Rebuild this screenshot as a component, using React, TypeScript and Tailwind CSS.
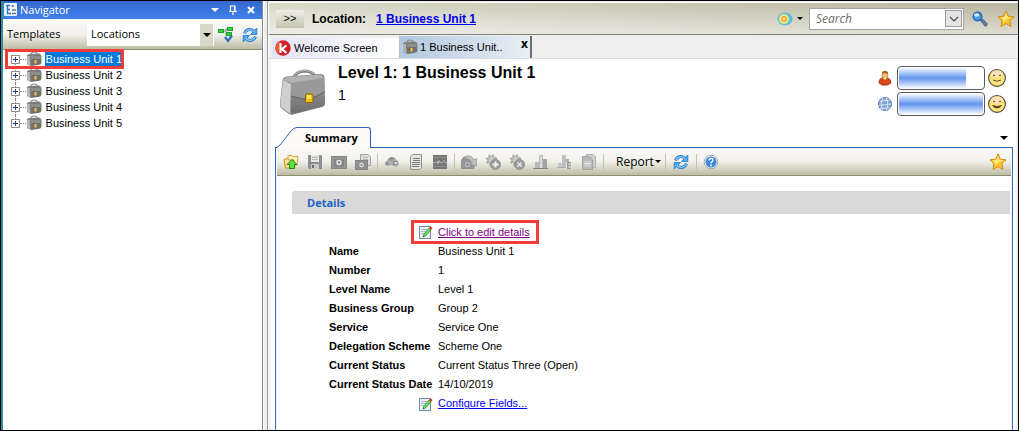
import React from "react";

type IconProps = { className?: string };

const Briefcase = ({ className = "size-4" }: IconProps) => (
  <svg viewBox="0 0 48 48" className={className} aria-hidden="true">
    <defs>
      <linearGradient id="caseFace" x1="0" y1="0" x2="0" y2="1">
        <stop offset="0" stopColor="#a8a8a8" />
        <stop offset="0.55" stopColor="#828282" />
        <stop offset="1" stopColor="#6e6e6e" />
      </linearGradient>
    </defs>
    <path d="M15 9 Q18 3.500 25 3 Q33 3 36 8" fill="none" stroke="#7c7c7c" strokeWidth="3" />
    <path d="M15 8.500 Q18 3 25 2.500 Q33 2.500 36 7.500" fill="none" stroke="#c4c4c4" strokeWidth="1" />
    <path d="M3.500 12 Q4 9 8 8.500 L41 6 Q45 6 45.500 9 L46 35 Q46 38 43 39 L14 46.500 Q12 47 10 46 L2 40 Q0.500 38 1 35 Z" fill="#808080" />
    <path d="M4 12 L12 16 L11.500 46 L2 39 Q1 37 1.500 34 Z" fill="#cfcfcf" />
    <path d="M12 15 L45 10 L45.500 35 Q45.500 38 43 38.500 L15 45.500 Q12 46 11.500 44 Z" fill="url(#caseFace)" />
    <path d="M12 15 L45 10 L45.500 24 L36 29 L24 31 L12 28 Z" fill="#999999" />
    <path d="M12 28 L24 31 L36 29 L45.500 24" fill="none" stroke="#626262" strokeWidth="1" />
    <path d="M4 12 Q6 9 9 9 L41 6.500 Q44 7 45 10 L12 15 Z" fill="#b2b2b2" />
    <rect x="26.500" y="26" width="7.500" height="8.500" rx="1" fill="#f5bd18" stroke="#8a6200" strokeWidth="1" />
    <rect x="28" y="27" width="4" height="4" fill="#ffe55f" />
  </svg>
);

const TreeBriefcase = () => (
  <svg viewBox="0 0 16 16" className="size-4 shrink-0" aria-hidden="true">
    <path d="M5 3.500 Q5 1 8 1 Q11 1 11.500 3.500" fill="none" stroke="#8a8a8a" strokeWidth="1.200" />
    <path d="M1 5 Q1 3 4 3 L13 2.500 Q15.500 3 15.500 6 L15.500 12 Q15 14 12 14 L5 15 L1 13 Z" fill="#7f7f7f" />
    <path d="M1 5 L4 5 L4.500 15 L1 13 Z" fill="#b3b3b3" />
    <path d="M4.500 5 L14 4.500 L15 12 L12.500 13.500 L5 14.500 Z" fill="#707070" />
    <path d="M4.500 5 H14 L15 8 H5 Z" fill="#8d8d8d" />
    <path d="M8.500 9 H10.500 V12.500 H8.500 Z" fill="#ffc72e" />
  </svg>
);

const Refresh = () => (
  <svg viewBox="0 0 16 16" className="size-4" aria-hidden="true">
    <path d="M2.500 6.500 Q4 2.500 8 2.500 Q10.500 2.500 12 4.500" fill="none" stroke="#2379cf" strokeWidth="3" />
    <path d="M14.800 1 V7.500 H8.500 Z" fill="#4fa4ee" stroke="#2379cf" strokeWidth="0.800" strokeLinejoin="round" />
    <path d="M2.800 6.300 Q4.300 2.600 8 2.600 Q10.500 2.700 12.500 5" fill="none" stroke="#8ccbfb" strokeWidth="1.300" />
    <path d="M13.500 9.500 Q12 13.500 8 13.500 Q5.500 13.500 4 11.500" fill="none" stroke="#2379cf" strokeWidth="3" />
    <path d="M1.200 15 V8.500 H7.500 Z" fill="#4fa4ee" stroke="#2379cf" strokeWidth="0.800" strokeLinejoin="round" />
    <path d="M13.200 9.700 Q11.700 13.400 8 13.400 Q5.500 13.300 3.500 11" fill="none" stroke="#8ccbfb" strokeWidth="1.300" />
  </svg>
);

const Star = () => (
  <svg viewBox="0 0 18 18" className="size-[18px]" aria-hidden="true">
    <path d="M9 1 L11.400 6.200 L17 6.800 L12.800 10.700 L14 16.500 L9 13.500 L4 16.500 L5 10.700 L1 6.800 L6.600 6.200 Z" fill="#fdc62b" stroke="#d98716" strokeWidth="1" strokeLinejoin="round" />
    <path d="M9 3 L10.600 7 L14.500 7.600 L9 9.500 L5.500 13 L6.300 10 L3.500 7.600 L7.200 7 Z" fill="#ffe978" />
  </svg>
);

const EditIcon = () => (
  <svg viewBox="0 0 14 14" className="size-[14px] shrink-0" aria-hidden="true">
    <rect x="0.500" y="1.500" width="11" height="12" fill="#e9f0f8" stroke="#7089ad" />
    <path d="M2 4.500H8M2 6.500H7M2 8.500H5" stroke="#a9b9cd" />
    <path d="M10 3 L12 5 L6.500 11 L4 12 L4.800 9.300 Z" fill="#6ad858" stroke="#2f9a28" strokeWidth="0.800" />
    <path d="M10 3 L11.500 1.200 L13.500 3 L12 5 Z" fill="#d8382b" />
    <path d="M4 12 L4.500 10.500 L5.500 11.500 Z" fill="#333" />
  </svg>
);

const Smiley = ({ big = false }: { big?: boolean }) => (
  <svg viewBox="0 0 20 20" className="size-5" aria-hidden="true">
    <circle cx="10" cy="10" r="8.400" fill="#fde27a" stroke="#4e4a3c" strokeWidth="1.100" />
    <ellipse cx="10" cy="6" rx="6" ry="3.800" fill="#ffe2b4" />
    <circle cx="7" cy="7.500" r="0.800" fill="#2c2818" />
    <circle cx="13" cy="7.500" r="0.800" fill="#2c2818" />
    {big ? (
      <path d="M5.500 11.500 Q10 16.500 14.500 11.500 Q10 13.500 5.500 11.500Z" fill="#3b2c12" stroke="#3b2c12" strokeWidth="0.700" />
    ) : (
      <path d="M6 12 Q10 14.500 14 12" fill="none" stroke="#4c4226" strokeWidth="0.900" />
    )}
  </svg>
);

const G = ({ children }: { children: React.ReactNode }) => (
  <svg viewBox="0 0 16 16" className="size-4" aria-hidden="true">
    {children}
  </svg>
);

const Gear = () => (
  <>
    <circle cx="6.500" cy="6" r="4" fill="#c9c9c9" />
    <circle cx="6.500" cy="6" r="4.800" fill="none" stroke="#adadad" strokeWidth="2" strokeDasharray="2 1.770" />
    <circle cx="6.500" cy="6" r="3.600" fill="none" stroke="#a8a8a8" strokeWidth="1" />
    <circle cx="10.500" cy="10.500" r="5" fill="#9c9c9c" stroke="#858585" strokeWidth="0.800" />
  </>
);

const groups: { label: string; icon: React.ReactNode }[][] = [
  [
    {
      label: "Open parent",
      icon: (
        <G>
          <path d="M5 3.500 V1.500 H9 L10 2.500 H15 L14 11 H5 Z" fill="#fff2c0" stroke="#d9a436" />
          <path d="M1 5.500 L4 4.500 L6 6 H11 L10.500 14 H2.500 Z" fill="#ffe690" stroke="#cf9120" />
          <path d="M9 5.500 L14 10.500 H11.500 V14.500 H6.500 V10.500 H4 Z" fill="#62e03e" stroke="#16871a" />
        </G>
      ),
    },
    {
      label: "Save",
      icon: (
        <G>
          <path d="M1 1 H14 L15 2 V15 H2 L1 14 Z" fill="#8f8f8f" />
          <rect x="4" y="1" width="8" height="7" fill="#e6e6e4" />
          <path d="M5 3.500H11M5 5.500H11" stroke="#b5b5b5" />
          <rect x="4" y="10" width="8" height="5" fill="#c8c8c8" />
          <rect x="5" y="11" width="2" height="3" fill="#6b6b6b" />
        </G>
      ),
    },
    {
      label: "Photo",
      icon: (
        <G>
          <rect x="0.500" y="2.500" width="15" height="12" fill="#959595" stroke="#858585" />
          <rect x="3" y="5" width="10" height="7.500" fill="#848484" />
          <circle cx="8" cy="8.500" r="2.700" fill="#ececec" />
          <circle cx="8" cy="8.500" r="1.200" fill="#757575" />
        </G>
      ),
    },
    {
      label: "Copy photo",
      icon: (
        <G>
          <path d="M5.500 0.500 H13 L15.500 3 V11.500 H5.500 Z" fill="#dededc" stroke="#a2a2a2" />
          <path d="M8 3.500H13M8 5.500H13" stroke="#b5b5b5" />
          <rect x="0.500" y="6.500" width="12" height="9" fill="#919191" stroke="#838383" />
          <circle cx="6.500" cy="11" r="2.200" fill="#e4e4e4" />
          <circle cx="6.500" cy="11" r="1" fill="#777" />
        </G>
      ),
    },
  ],
  [
    {
      label: "Find",
      icon: (
        <G>
          <path d="M1 9 L4 5 L7 3 L11 4 L14.500 8 L15 11 L12 13 L8 11 L5 12 L1 11 Z" fill="#acacac" />
          <path d="M4 5 L7 3 L11 4 L8 7 Z" fill="#8f8f8f" />
          <circle cx="3.500" cy="9.500" r="2.500" fill="#969696" stroke="#c5c5c5" strokeWidth="0.700" />
          <circle cx="11" cy="9" r="3" fill="#868686" stroke="#b8b8b8" />
          <circle cx="11.500" cy="9" r="1.300" fill="#e0e0e0" />
        </G>
      ),
    },
    {
      label: "Document",
      icon: (
        <G>
          <path d="M4.500 0.500 H13.500 V13.500 L11.500 15.500 H2.500 V2.500 Z" fill="#e4e4e2" stroke="#909090" />
          <path d="M5 4.500H12M5 6.500H12M4 8.500H12M4 10.500H12M4 12.500H11" stroke="#7c7c7c" />
        </G>
      ),
    },
    {
      label: "Activity",
      icon: (
        <G>
          <rect x="1" y="1" width="14" height="14" fill="#777777" />
          <path d="M1 3.500H15M1 12.500H15" stroke="#8c8c8c" />
          <path d="M1 8.500 H4 L5 7 L6 10 L7 6.500 L8 9 L9 8 L10 9 L12 6.500 L13 8.500 H15" fill="none" stroke="#ccc" strokeWidth="0.700" />
        </G>
      ),
    },
  ],
  [
    {
      label: "Send photo",
      icon: (
        <G>
          <path d="M0.500 6 L3 3 H8 L11 6 H13 V14.500 H0.500 Z" fill="#989898" stroke="#858585" strokeWidth="0.800" />
          <path d="M3 3.500 Q6 0.500 10 2.500 Q12 3.500 12.500 6 L15.500 4.500 V12 L9 10 L11 8.500 Q9 4.500 3 3.500 Z" fill="#c0c0c0" stroke="#909090" strokeWidth="0.700" />
          <circle cx="6.500" cy="10.500" r="1.800" fill="#777" stroke="#e2e2e2" />
        </G>
      ),
    },
    {
      label: "Add process",
      icon: (
        <G>
          <Gear />
          <path d="M10.500 7.500V13.500M7.500 10.500H13.500" stroke="#f5f5f5" strokeWidth="1.800" />
        </G>
      ),
    },
    {
      label: "Remove process",
      icon: (
        <G>
          <Gear />
          <path d="M8.500 8.500L12.500 12.500M12.500 8.500L8.500 12.500" stroke="#ededed" strokeWidth="1.500" />
        </G>
      ),
    },
    {
      label: "Chart",
      icon: (
        <G>
          <rect x="2" y="8" width="4" height="6" fill="#b9b9b9" />
          <rect x="6" y="1" width="4" height="13" fill="#bcbcbc" />
          <rect x="7" y="2" width="2" height="12" fill="#dadada" />
          <rect x="10" y="5" width="4" height="9" fill="#a5a5a5" />
          <path d="M0 14.500H15" stroke="#808080" />
        </G>
      ),
    },
    {
      label: "Chart export",
      icon: (
        <G>
          <rect x="1" y="9" width="4" height="4" fill="#c8c8c8" />
          <rect x="5" y="1" width="4" height="12" fill="#bfbfbf" />
          <rect x="9" y="5" width="3" height="8" fill="#b0b0b0" />
          <path d="M0 13.500H9" stroke="#aaa" />
          <rect x="9" y="8" width="6" height="7" fill="#e7e7e4" />
          <path d="M14 8.700 H10.700 V14.300 H14 M10.700 11.500H14" fill="none" stroke="#999" strokeWidth="1.400" />
        </G>
      ),
    },
    {
      label: "Copy",
      icon: (
        <G>
          <path d="M5.500 0.500 H12 L14.500 3 V13.500 H5.500 Z" fill="#cfcfcd" stroke="#b0b0b0" />
          <path d="M1.500 2.500 H8 L11.500 6 V15.500 H1.500 Z" fill="#bababa" stroke="#a2a2a2" />
          <path d="M3.500 7H9.500V13H3.500Z" fill="#cecece" />
          <path d="M3 9.500H10" stroke="#e5e5e5" />
        </G>
      ),
    },
  ],
];

const Sep = () => <span className="mx-[2px] h-4 w-px shrink-0 bg-[#c3c3ae]" />;

const Caret = () => (
  <svg viewBox="0 0 6 3" className="h-[3px] w-[6px]" aria-hidden="true">
    <path d="M0 0H6L3 3Z" fill="currentColor" />
  </svg>
);

const units = [1, 2, 3, 4, 5];

const details: [string, string][] = [
  ["Name", "Business Unit 1"],
  ["Number", "1"],
  ["Level Name", "Level 1"],
  ["Business Group", "Group 2"],
  ["Service", "Service One"],
  ["Delegation Scheme", "Scheme One"],
  ["Current Status", "Current Status Three (Open)"],
  ["Current Status Date", "14/10/2019"],
];

function Navigator() {
  return (
    <aside className="flex w-[262px] shrink-0 flex-col border-r border-l-2 border-r-[#7d8990] border-l-[#2b8ea5] bg-white">
      <header className="flex h-[18px] items-center bg-gradient-to-b from-[#3568cf] to-[#4080ea] pr-[2px] pl-px text-white">
        <svg viewBox="0 0 14 14" className="size-[14px]" aria-hidden="true">
          <rect width="13" height="13" rx="1" fill="#edf3fb" />
          <path d="M2 2.500H6M3.500 3V10.500H7M3.500 6.500H6" fill="none" stroke="#2e74c8" strokeWidth="1.400" />
          <path d="M7.500 3H10M8 7H12M8 10.500H12" stroke="#6b7484" strokeWidth="1.400" />
        </svg>
        <h2 className="ml-[2px] flex-1 font-['Open_Sans',sans-serif] text-[11px] leading-4">Navigator</h2>
        <button aria-label="Panel menu" className="grid size-[18px] place-items-center">
          <svg viewBox="0 0 8 4" className="h-1 w-2"><path d="M0 0H8L4 4Z" fill="white" /></svg>
        </button>
        <button aria-label="Pin" className="grid size-[18px] place-items-center">
          <svg viewBox="0 0 8 10" className="h-[10px] w-2"><path d="M1.500 6V1H6V6M0 6.500H8M4 7V10M5.500 1V6" fill="none" stroke="white" strokeWidth="1.200" /></svg>
        </button>
        <button aria-label="Close" className="grid size-[18px] place-items-center">
          <svg viewBox="0 0 8 8" className="size-2"><path d="M1 1L7 7M7 1L1 7" stroke="white" strokeWidth="2" /></svg>
        </button>
      </header>
      <div className="flex h-[31px] items-center border-t border-b border-t-white border-b-[#8b8b77] bg-gradient-to-b from-[#faf9f6] via-[#f1f0ea] to-[#bebda5] pr-[2px] pl-[4px] font-['Open_Sans',sans-serif]">
        <label htmlFor="template" className="w-20 shrink-0 text-[11px]">Templates</label>
        <div className="relative w-[127px]">
          <select id="template" className="block h-[22px] w-full appearance-none bg-white pl-1 text-[11px] text-black outline-none">
            <option>Locations</option>
          </select>
          <span className="pointer-events-none absolute top-0 right-px grid h-full w-[13px] place-items-center bg-[#d9d7c8]">
            <svg viewBox="0 0 8 4" className="h-1 w-2"><path d="M0 0H8L4 4Z" /></svg>
          </span>
        </div>
        <button aria-label="Apply template" className="ml-[2px] grid size-5 place-items-center">
          <svg viewBox="0 0 16 16" className="size-4">
            <path d="M5 4H8M8 2H10M8 2V8" fill="none" stroke="#8b8b8b" />
            <rect x="0.500" y="2.500" width="5" height="3" fill="#36d445" stroke="#18a32b" />
            <rect x="9.500" y="0.500" width="5" height="3" fill="#36d445" stroke="#18a32b" />
            <rect x="8.500" y="5.500" width="5" height="3" fill="#36d445" stroke="#18a32b" />
            <path d="M7 10L10 14L14 8.500" fill="none" stroke="#2f6fbe" strokeWidth="2.200" />
          </svg>
        </button>
        <button aria-label="Refresh" className="ml-1 grid size-5 place-items-center"><Refresh /></button>
      </div>
      <ul className="pt-px pl-1">
        {units.map((n) => (
          <li
            key={n}
            className={
              n === 1
                ? "relative flex h-4 w-[115px] items-center pl-1 outline-3 -outline-offset-1 outline-[#f23c3c]"
                : "flex h-4 w-[115px] items-center pl-1"
            }
          >
            <span className="flex h-4 flex-col items-center">
              <span className={n === 1 ? "h-1" : "h-1 border-l border-dotted border-[#808080]"} />
              <button aria-label={`Expand Business Unit ${n}`}>
                <svg viewBox="0 0 9 9" className="block size-[9px]">
                  <rect x="0.500" y="0.500" width="8" height="8" fill="#f8f8f8" stroke="#8f8f8f" />
                  <path d="M2 4.500H7M4.500 2V7" stroke="#26408f" />
                </svg>
              </button>
              <span className={n === 5 ? "h-[3px]" : "h-[3px] border-l border-dotted border-[#808080]"} />
            </span>
            <span className="w-[6px] border-t border-dotted border-[#808080]" />
            <TreeBriefcase />
            <a
              href={`#unit-${n}`}
              className={
                n === 1
                  ? "ml-[3px] bg-[#0078d7] pl-px text-[11px] leading-[15px] whitespace-nowrap text-white"
                  : "ml-[3px] pl-px text-[11px] leading-[15px] whitespace-nowrap"
              }
            >
              Business Unit {n}
            </a>
          </li>
        ))}
      </ul>
    </aside>
  );
}

function Gauge({ value, label }: { value: number; label: string }) {
  return (
    <div role="meter" aria-label={label} aria-valuenow={value} className="h-6 w-[88px] rounded-[4px] border border-[#5c5c5c] bg-white p-px">
      <div className="h-full bg-gradient-to-b from-[#f4f7fe] via-[#6394ec] to-[#f4f7fe]" style={{ width: `${value}%` }} />
    </div>
  );
}

function LocationBar() {
  return (
    <div className="flex h-[33px] items-center border-t border-b border-t-white border-b-[#808078] bg-[linear-gradient(to_bottom,rgba(255,255,255,0),rgba(255,255,255,0.55)),linear-gradient(to_right,#d8d8c8,#b7b59c)] pr-[3px] pl-[7px] text-[12px] font-bold">
      <button aria-label="Expand" className="h-[18px] w-7 bg-gradient-to-b from-[#efeee6] to-[#c5c4af] text-[11px] font-normal">&gt;&gt;</button>
      <span className="ml-2">Location:</span>
      <a href="#location" className="ml-[10px] flex-1 text-[#0000ee] underline">1 Business Unit 1</a>
      <button aria-label="Radar options" className="flex items-center gap-1">
        <svg viewBox="0 0 16 14" className="h-[14px] w-4">
          <ellipse cx="8" cy="7" rx="7.500" ry="6.500" fill="#5cbbe2" />
          <circle cx="7" cy="7" r="5.300" fill="#a6e0b0" />
          <circle cx="7" cy="7" r="4.300" fill="#fff05d" />
          <circle cx="7" cy="7" r="2.600" fill="#ffb05c" stroke="#ee8a3c" strokeWidth="0.800" />
          <circle cx="7" cy="7" r="1.300" fill="#ffe28a" />
        </svg>
        <Caret />
      </button>
      <div className="ml-[6px] flex h-[22px] w-[155px] items-center border border-[#a5a5a5] bg-white pr-px">
        <input aria-label="Search" placeholder="Search" className="h-full min-w-0 flex-1 pl-[6px] font-['Open_Sans',sans-serif] text-[12px] font-normal italic outline-none placeholder:text-[#6d6d6d]" />
        <button aria-label="Search options" className="grid h-[17px] w-[17px] place-items-center border border-[#9c9c9c] bg-[#e4e4e4]">
          <svg viewBox="0 0 10 6" className="h-[6px] w-[10px]"><path d="M1 1L5 5L9 1" fill="none" stroke="#444" strokeWidth="1.100" /></svg>
        </button>
      </div>
      <button aria-label="Run search" className="ml-2">
        <svg viewBox="0 0 16 16" className="size-4">
          <path d="M8 9L10 7.500L15.500 13L13.500 15.500Z" fill="#5b7bb0" stroke="#2c4673" strokeWidth="0.700" />
          <circle cx="5.500" cy="5.500" r="4.300" fill="#4d9ce6" stroke="#2763b4" strokeWidth="1.500" />
          <ellipse cx="4.500" cy="4" rx="2.500" ry="1.800" fill="#d6f1ff" />
        </svg>
      </button>
      <button aria-label="Add to favourites" className="ml-[9px]"><Star /></button>
    </div>
  );
}

function Tabs() {
  return (
    <div className="flex h-6 items-end border-b border-[#dcdcdc] pt-px pl-[3px]">
      <a href="#welcome" className="flex h-[20px] w-[127px] items-center gap-[3px] bg-gradient-to-r from-[#e4e4f7] to-white pl-[3px] text-[11px]">
        <svg viewBox="0 0 16 16" className="size-4" aria-hidden="true">
          <circle cx="8" cy="8" r="7.700" fill="#d01f26" />
          <path d="M5 0.900 A7.700 7.700 0 0 0 3.500 14 Z" fill="#e8622a" />
          <path d="M5.500 3V13M11.500 5.500L7 9L11.500 13" fill="none" stroke="white" strokeWidth="2.200" />
        </svg>
        Welcome Screen
      </a>
      <div className="flex h-[22px] w-[133px] items-center border-r-2 border-l border-r-[#6e6e6e] border-l-[#b6bfd0] bg-gradient-to-r from-[#b3c7e0] to-[#e9eff6] pl-[2px] text-[11px]">
        <TreeBriefcase />
        <a href="#unit" className="ml-[2px] flex-1">1 Business Unit..</a>
        <button aria-label="Close tab" className="mr-[2px] mb-[6px] font-['Open_Sans',sans-serif] text-[12px] leading-4 font-bold">x</button>
      </div>
    </div>
  );
}

function Record() {
  return (
    <div className="mr-[2px] ml-[2px] flex flex-1 flex-col bg-white">
      <div className="flex items-start pt-[5px] pr-[9px] pl-2">
        <Briefcase className="mt-1 size-12 shrink-0" />
        <div className="ml-[11px] min-w-0 flex-1">
          <h1 className="text-[16px] leading-[18px] font-bold">Level 1: 1 Business Unit 1</h1>
          <p className="mt-[4px] text-[14px] leading-[18px]">1</p>
        </div>
        <div className="mt-[2px] flex flex-col gap-[2px]">
          <div className="flex items-center gap-[2px]">
            <svg viewBox="0 0 16 16" className="mr-[2px] size-4" aria-hidden="true">
              <path d="M2 13 Q2 8 6 8 H11 Q14 9 14 13 Q11 16 5 15 Z" fill="#d8481c" stroke="#98290d" strokeWidth="0.800" />
              <ellipse cx="8" cy="5" rx="3" ry="4" fill="#f2c177" stroke="#a66b20" strokeWidth="0.600" />
              <path d="M5 4 Q5 0.500 8 1 Q11 0.500 11 4 Q8 2.500 5 4Z" fill="#9c681b" />
              <path d="M6 8L8 10L10 8" fill="#ffe0b0" />
            </svg>
            <Gauge value={80} label="User rating" />
            <Smiley />
          </div>
          <div className="flex items-center gap-[2px]">
            <svg viewBox="0 0 16 16" className="mr-[2px] size-4" aria-hidden="true">
              <circle cx="8" cy="8" r="6.600" fill="#7fa3d6" stroke="#4c6d9a" strokeWidth="0.800" />
              <path d="M2.500 5.500L13 4M1.500 9.500L14.500 8M3 12.500L13 12M6 1.500Q2.500 8 6 14.500M9 1.500Q12.500 8 9 14.500" fill="none" stroke="#e0eaf6" strokeWidth="0.900" />
            </svg>
            <Gauge value={100} label="Global rating" />
            <Smiley big />
          </div>
        </div>
      </div>

      <div className="relative mt-[11px] -mb-px flex h-[21px] items-end pr-[8px] pl-[6px]">
        <svg viewBox="0 0 20 21" className="h-[21px] w-5 shrink-0" aria-hidden="true">
          <path d="M0 20.500 L3 18 L14 4 Q17 0.500 20 0.500 V21 H0Z" fill="#fbfaf8" />
          <path d="M0 20.500 L3 18 L14 4 Q17 0.500 20 0.500" fill="none" stroke="#2e68bd" />
        </svg>
        <a href="#summary" className="flex h-[21px] items-center rounded-tr-[3px] border-t border-r border-[#2e68bd] bg-[#fbfaf8] pr-3 pl-2 font-['Open_Sans',sans-serif] text-[11px] font-bold">Summary</a>
        <button aria-label="Tab list" className="mb-[8px] ml-auto">
          <svg viewBox="0 0 8 4" className="block h-1 w-2"><path d="M0 0H8L4 4Z" /></svg>
        </button>
      </div>

      <section className="mr-[3px] ml-[4px] flex-1 border border-b-0 border-[#2e68bd]">
        <div className="mx-px flex h-7 items-center border-b border-[#8d8d72] bg-gradient-to-b from-[#fbfaf8] via-[#f1f0ea] to-[#bdbca4] pr-[4px] pl-[2px]">
          {groups.map((group, i) => (
            <React.Fragment key={i}>
              {group.map((item) => (
                <button key={item.label} aria-label={item.label} className="grid size-6 shrink-0 place-items-center">{item.icon}</button>
              ))}
              <Sep />
            </React.Fragment>
          ))}
          <button className="mr-[2px] ml-2 flex items-center gap-px pl-[2px] font-['Open_Sans',sans-serif] text-[12px] leading-4">Report<Caret /></button>
          <Sep />
          <button aria-label="Refresh" className="mx-px grid size-6 place-items-center"><Refresh /></button>
          <Sep />
          <button aria-label="Help" className="grid size-6 place-items-center">
            <G>
              <circle cx="8" cy="8" r="6.800" fill="#f4f4f4" stroke="#8d959e" strokeWidth="0.800" />
              <circle cx="8" cy="8" r="5.500" fill="#3688dc" />
              <path d="M6 6.500 Q6 4.500 8 4.500 Q10 4.500 10 6.300 Q10 7.500 8 8.600 V9.500" fill="none" stroke="white" strokeWidth="1.300" />
              <circle cx="8" cy="11.400" r="0.900" fill="white" />
            </G>
          </button>
          <button aria-label="Favourite" className="ml-auto"><Star /></button>
        </div>

        <div className="pt-[15px] pr-[2px] pl-4">
          <h2 className="h-[23px] rounded-tl-[3px] bg-[#d9d9d9] pl-[15px] font-['Open_Sans',sans-serif] text-[11px] leading-[23px] font-bold text-[#2160c4]">Details</h2>
          <div className="pt-[9px] pl-[37px] text-[11px]">
            <div className="mb-px ml-[85px] flex h-[18px] w-fit items-center gap-[5px] pr-[6px] pl-[5px] outline-3 outline-[#f23c3c]">
              <EditIcon />
              <a href="#edit" className="text-[#800080] underline">Click to edit details</a>
            </div>
            <table>
              <tbody>
                {details.map(([name, value]) => (
                  <tr key={name} className="h-[19px]">
                    <th scope="row" className="w-[109px] text-left leading-[19px] font-bold whitespace-nowrap">{name}</th>
                    <td className="leading-[19px] whitespace-nowrap">{value}</td>
                  </tr>
                ))}
              </tbody>
            </table>
            <div className="ml-[85px] flex h-[19px] items-center gap-[5px] pl-[5px]">
              <EditIcon />
              <a href="#configure" className="text-[#0000ee] underline">Configure Fields...</a>
            </div>
          </div>
        </div>
      </section>
    </div>
  );
}

export default function App() {
  return (
    <div className="flex min-h-screen border border-black bg-[#efefef] font-['Liberation_Sans',sans-serif] text-black">
      <Navigator />
      <div className="w-1 shrink-0 border-l border-white" />
      <main className="flex min-w-0 flex-1 flex-col border-l border-[#999]">
        <div className="flex flex-1 flex-col border-l border-white pt-px">
          <LocationBar />
          <Tabs />
          <Record />
        </div>
      </main>
    </div>
  );
}
